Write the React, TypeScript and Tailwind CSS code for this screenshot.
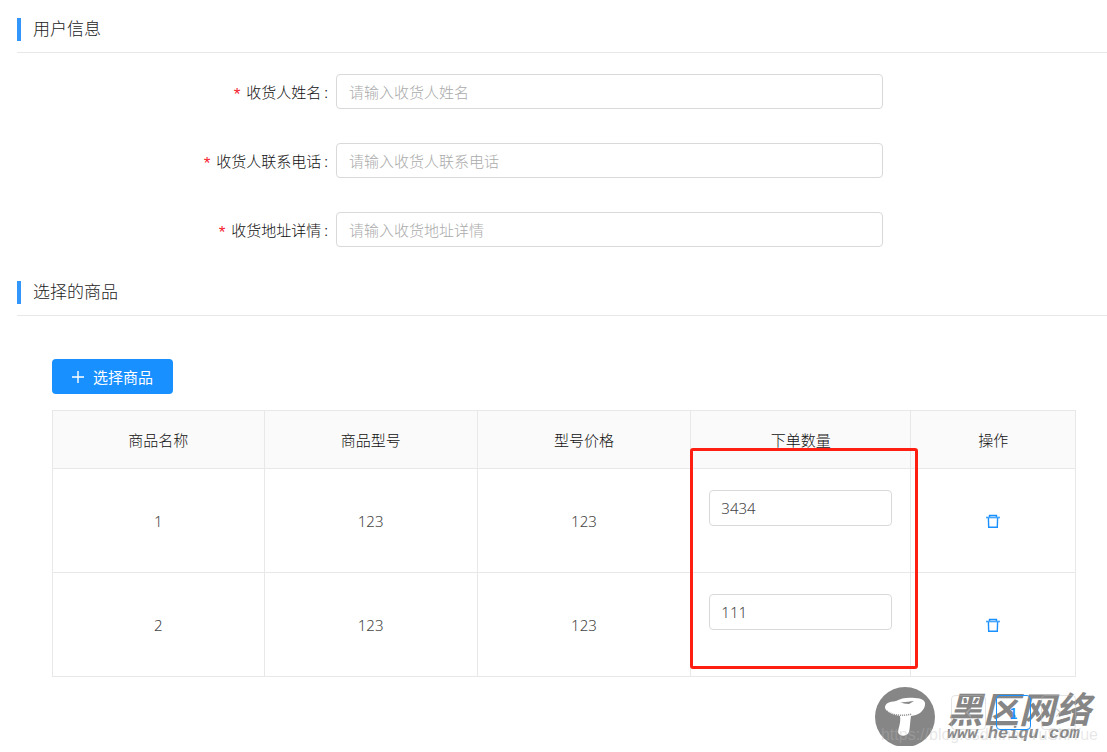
import { useState } from 'react'
import { FiChevronLeft, FiChevronRight } from 'react-icons/fi'

type TProduct = {
   id: number
   model: string
   price: string
   amount: string
}

const fields = [
   { id: 'name', label: '收货人姓名', placeholder: '请输入收货人姓名' },
   { id: 'phone', label: '收货人联系电话', placeholder: '请输入收货人联系电话' },
   { id: 'address', label: '收货地址详情', placeholder: '请输入收货地址详情' },
]

const initialProducts: TProduct[] = [
   { id: 1, model: '123', price: '123', amount: '3434' },
   { id: 2, model: '123', price: '123', amount: '111' },
]

const SectionTitle = ({ title }: { title: string }) => (
   <div className="flex items-start border-b border-[#e8e8e8] pb-[11px]">
      <span className="w-1 h-[23px] bg-[#3296fa]" />
      <h2 className="ml-3 text-[17px] leading-5 text-[#222]">{title}</h2>
   </div>
)

const PlusIcon = () => (
   <svg viewBox="0 0 12 12" className="w-3 h-3" fill="#fff">
      <path d="M0 5.3h12v1.4H0zM5.3 0h1.4v12H5.3z" />
   </svg>
)

const TrashIcon = () => (
   <svg viewBox="0 0 14 14" className="w-[14px] h-[14px]" fill="none" stroke="#1890ff">
      <path d="M0 3.5h14" strokeWidth="1.6" strokeOpacity="0.8" />
      <path d="M3.5 3V1.5h7V3M2.4 4l.3 9.3h8.6l.3-9.3" strokeWidth="1.4" />
   </svg>
)

const Watermark = () => (
   <div className="absolute right-4 top-[10px] flex items-center gap-3 text-[#868686]">
      <svg viewBox="0 0 60 60" className="w-[60px] h-[60px]">
         <circle cx="30" cy="30" r="30" fill="#868686" />
         <path
            d="M10 21C10 16 14 15 21 14C26 11 33 10 40 11C47 11 51 14 50 18C49 24 44 28 36 29C35 35 35 41 34 45C32 50 24 50 23 45C24 39 26 35 25 29C18 28 12 26 10 21Z"
            fill="#fff"
         />
         <path
            d="M12 24C18 29 29 29 37 27"
            fill="none"
            stroke="#868686"
            strokeWidth="1.5"
            strokeDasharray="1 1"
         />
         <path d="M25 15c5 1 9-1 14-1l-5 3-5-.5z" fill="#868686" />
      </svg>
      <div className="font-bold italic">
         <p className="text-[36px] leading-[34px]">黑区网络</p>
         <p className="font-['Liberation_Mono',monospace] text-[17px] leading-5">
            www.heiqu.com
         </p>
      </div>
   </div>
)

export default function App() {
   const [products, setProducts] = useState(initialProducts)

   const setAmount = (id: number, amount: string) =>
      setProducts(products.map((p) => (p.id === id ? { ...p, amount } : p)))

   return (
      <main className="bg-white pt-[18px] pl-[17px] text-[15px] leading-5 text-[#111] font-['Noto_Sans_CJK_SC',sans-serif] font-light">
         <SectionTitle title="用户信息" />
         <form className="grid gap-[34px] pt-[21px] pb-[34px]">
            {fields.map((f) => (
               <div
                  key={f.id}
                  className="grid grid-cols-[319fr_547fr_224fr] items-center"
               >
                  <label
                     htmlFor={f.id}
                     className="flex items-center justify-end pr-2"
                  >
                     <span className="mr-1 pt-2 font-['Liberation_Mono',monospace] text-[17px] leading-4 text-[#f5222d]">
                        *
                     </span>
                     {f.label}
                     <span className="ml-[3px]">:</span>
                  </label>
                  <input
                     id={f.id}
                     placeholder={f.placeholder}
                     className="h-[35px] w-full rounded border border-[#d9d9d9] px-3 placeholder:text-[#aaa]"
                  />
               </div>
            ))}
         </form>

         <SectionTitle title="选择的商品" />
         <div className="pt-[43px] pl-[35px] pr-[31px]">
            <button className="flex h-[35px] items-center gap-[9px] rounded bg-[#1890ff] px-5 text-white font-normal">
               <PlusIcon />
               选择商品
            </button>
            <table className="mt-4 w-full table-fixed border-collapse text-center">
               <colgroup>
                  <col className="w-[20.7%]" />
                  <col className="w-[20.8%]" />
                  <col className="w-[20.9%]" />
                  <col className="w-[21.5%]" />
                  <col />
               </colgroup>
               <thead>
                  <tr className="h-[58px] bg-[#fafafa] *:border *:border-[#e8e8e8] *:font-light">
                     <th>商品名称</th>
                     <th>商品型号</th>
                     <th>型号价格</th>
                     <th className="relative">
                        下单数量
                        <span className="absolute -left-px -right-2 top-[37px] h-[221px] rounded-[3px] border-3 border-[#ff1f12] pointer-events-none" />
                     </th>
                     <th>操作</th>
                  </tr>
               </thead>
               <tbody className="font-['Noto_Sans','Noto_Sans_CJK_SC',sans-serif] text-[#444]">
                  {products.map((p) => (
                     <tr key={p.id} className="h-[104px] *:border *:border-[#e8e8e8]">
                        <td>{p.id}</td>
                        <td>{p.model}</td>
                        <td>{p.price}</td>
                        <td className="px-[18px] pt-[21px] align-top">
                           <input
                              aria-label="下单数量"
                              value={p.amount}
                              onChange={(e) => setAmount(p.id, e.target.value)}
                              className="h-9 w-full rounded border border-[#d9d9d9] px-[11px]"
                           />
                        </td>
                        <td>
                           <button
                              aria-label="删除"
                              className="mx-auto block"
                              onClick={() =>
                                 setProducts(products.filter((x) => x.id !== p.id))
                              }
                           >
                              <TrashIcon />
                           </button>
                        </td>
                     </tr>
                  ))}
               </tbody>
            </table>
         </div>

         <footer className="relative pt-[18px] pr-[31px] pb-4">
            <Watermark />
            <p className="absolute right-[9px] top-12 text-[16px] text-[#bbb]/35 font-['Liberation_Sans',sans-serif]">
               https://blog.csdn.net/YuShiYue
            </p>
            <nav className="relative flex justify-end gap-[10px] *:flex *:size-[35px] *:items-center *:justify-center *:rounded *:border">
               <button aria-label="上一页" className="border-[#bbb]/40 text-[#bbb]/60">
                  <FiChevronLeft />
               </button>
               <button className="border-[#1890ff] font-medium text-[#1890ff]">1</button>
               <button aria-label="下一页" className="border-[#bbb]/40 text-[#bbb]/60">
                  <FiChevronRight />
               </button>
            </nav>
         </footer>
      </main>
   )
}
